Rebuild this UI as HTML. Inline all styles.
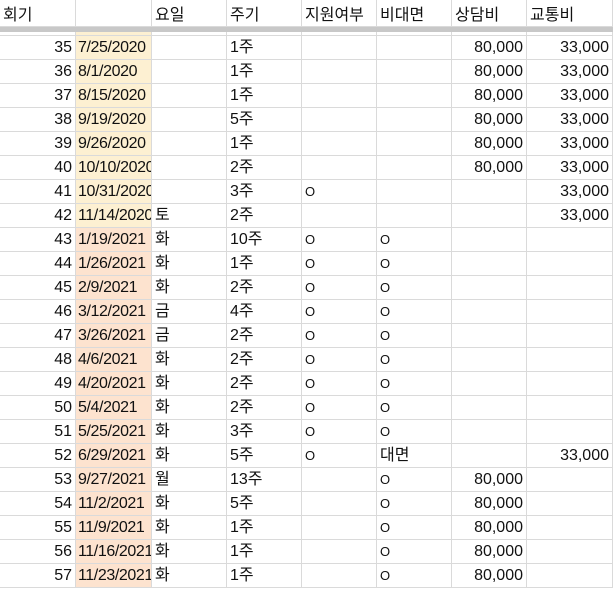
<!DOCTYPE html><html><head><meta charset="utf-8"><style>
body{margin:0;background:#fff;width:613px;height:589px;overflow:hidden;font-family:"Liberation Sans","Noto Sans CJK KR",sans-serif;font-size:16px;color:#111}
.r{position:absolute;left:0;width:613px;height:24px;border-bottom:1px solid #dadada;box-sizing:border-box}
.c{position:absolute;top:0;height:100%;border-right:1px solid #dadada;box-sizing:border-box;overflow:hidden;white-space:nowrap;line-height:24px;padding:0 3px}
.n{text-align:right}
.dt{padding:0 2px;letter-spacing:-0.4px}
.hdr{position:absolute;left:0;top:0;width:613px;height:27px;border-bottom:1px solid #dadada;box-sizing:border-box}
.hdr .c{line-height:31px}
.band{position:absolute;left:0;top:27px;width:613px;height:5px;background:#c8c8c8}
.o{font-size:13px}
</style></head><body>
<div class="hdr" id="h"></div><div class="band"></div>
<div id="g"></div>
<script>
var X=[0,76,152,227,302,377,452,527,613];
function cells(vals,top,h,bgs){var s='';for(var i=0;i<8;i++){var v=vals[i]||'';if(v=='O')v='<span class="o">O</span>';var n=(i==0||i==6||i==7)&&top>30;var bg=bgs&&bgs[i]?'background:'+bgs[i]+';':'';s+='<div class="c'+(n?' n':'')+(i==1&&top>30?' dt':'')+'" style="left:'+X[i]+'px;width:'+(X[i+1]-X[i])+'px;'+bg+'">'+v+'</div>';}return s;}
document.getElementById('h').innerHTML=cells(['회기','','요일','주기','지원여부','비대면','상담비','교통비'],0);
var d=[
[35,'7/25/2020','','1주','','','80,000','33,000'],
[36,'8/1/2020','','1주','','','80,000','33,000'],
[37,'8/15/2020','','1주','','','80,000','33,000'],
[38,'9/19/2020','','5주','','','80,000','33,000'],
[39,'9/26/2020','','1주','','','80,000','33,000'],
[40,'10/10/2020','','2주','','','80,000','33,000'],
[41,'10/31/2020','','3주','O','','','33,000'],
[42,'11/14/2020','토','2주','','','','33,000'],
[43,'1/19/2021','화','10주','O','O','',''],
[44,'1/26/2021','화','1주','O','O','',''],
[45,'2/9/2021','화','2주','O','O','',''],
[46,'3/12/2021','금','4주','O','O','',''],
[47,'3/26/2021','금','2주','O','O','',''],
[48,'4/6/2021','화','2주','O','O','',''],
[49,'4/20/2021','화','2주','O','O','',''],
[50,'5/4/2021','화','2주','O','O','',''],
[51,'5/25/2021','화','3주','O','O','',''],
[52,'6/29/2021','화','5주','O','대면','','33,000'],
[53,'9/27/2021','월','13주','','O','80,000',''],
[54,'11/2/2021','화','5주','','O','80,000',''],
[55,'11/9/2021','화','1주','','O','80,000',''],
[56,'11/16/2021','화','1주','','O','80,000',''],
[57,'11/23/2021','화','1주','','O','80,000','']];
var s='';d.forEach(function(r,k){var top=36+k*24;var bg=[0,k<8?'#fdf0d2':'#fde3cf'];s+='<div class="r" style="top:'+top+'px">'+cells(r,top,24,bg)+'</div>';});
s='<div class="r" style="top:32px;height:4px">'+cells([],32,4,[0,'#fdf0d2'])+'</div>'+s;
document.getElementById('g').innerHTML=s;
</script>
</body></html>
